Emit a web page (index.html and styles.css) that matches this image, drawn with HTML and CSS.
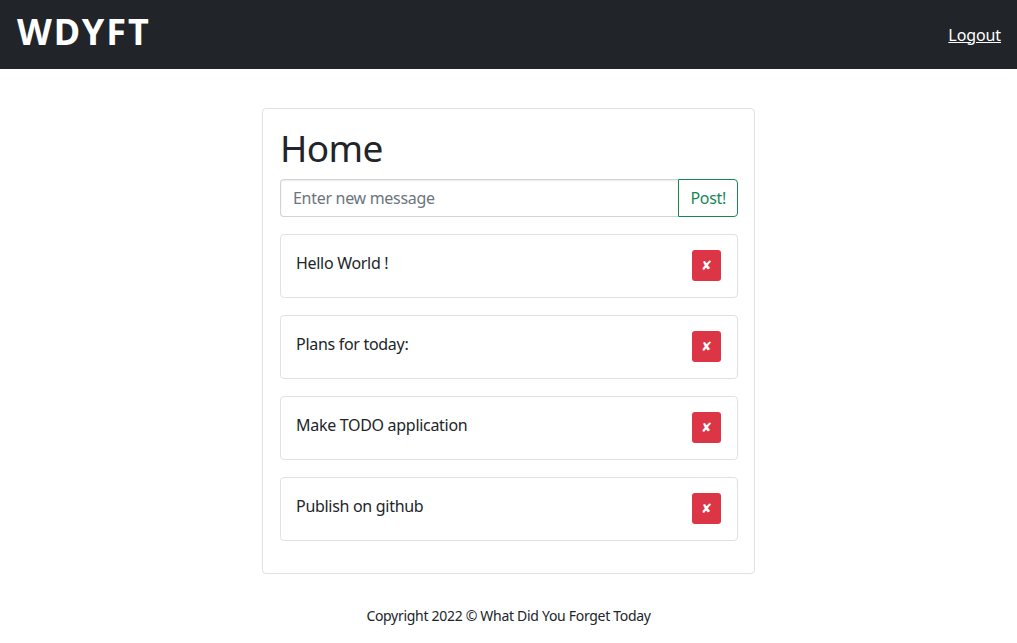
FILE: index.html
```html
<!DOCTYPE html>
<html lang="en">
<head>
<meta charset="utf-8">
<title>WDYFT</title>
<link rel="stylesheet" href="styles.css">
</head>
<body>
<nav class="navbar">
  <a class="brand" href="#">WDYFT</a>
  <a class="logout" href="#">Logout</a>
</nav>
<main class="container">
  <section class="card">
    <h1 class="title">Home</h1>
    <form class="input-group">
      <input class="field" type="text" placeholder="Enter new message">
      <button class="post" type="button">Post!</button>
    </form>
    <ul class="messages">
      <li class="message"><span class="text">Hello World !</span><button class="del" type="button">✘</button></li>
      <li class="message"><span class="text">Plans for today:</span><button class="del" type="button">✘</button></li>
      <li class="message"><span class="text">Make TODO application</span><button class="del" type="button">✘</button></li>
      <li class="message"><span class="text">Publish on github</span><button class="del" type="button">✘</button></li>
    </ul>
  </section>
</main>
<footer class="footer">Copyright 2022 © What Did You Forget Today</footer>
</body>
</html>
```

FILE: styles.css
```css
* { box-sizing: border-box; }
html, body { margin: 0; padding: 0; }
body {
  font-family: "Noto Sans", "Open Sans", sans-serif;
  font-size: 16px;
  line-height: 1.5;
  letter-spacing: -0.3px;
  color: #212529;
  background: #fff;
}
.navbar {
  height: 69px;
  background: #212529;
  display: flex;
  align-items: center;
  justify-content: space-between;
  padding: 0 16px 0 17px;
}
.brand {
  color: #fff;
  text-decoration: none;
  font-weight: 700;
  font-size: 36px;
  letter-spacing: 2px;
  line-height: 1;
  margin-top: -6px;
}
.logout {
  color: #fff;
  font-size: 16px;
  text-decoration: underline;
  letter-spacing: -0.1px;
}
.container {
  display: flex;
  justify-content: center;
  padding-top: 39px;
}
.card {
  width: 493px;
  border: 1px solid #dee2e6;
  border-radius: 4px;
  padding: 17px 16px 32px 17px;
}
.title {
  margin: 0 0 9px 0;
  font-size: 37px;
  font-weight: 400;
  line-height: 1.2;
  letter-spacing: -0.6px;
}
.input-group {
  display: flex;
  height: 38px;
  margin: 0;
}
.field {
  flex: 1;
  min-width: 0;
  border: 1px solid #ced4da;
  border-right: none;
  border-radius: 4px 0 0 4px;
  padding: 6px 12px;
  font: inherit;
  letter-spacing: -0.3px;
  color: #212529;
  box-shadow: inset 0 1px 2px rgba(0,0,0,0.08);
}
.field::placeholder { color: #6c757d; }
.post {
  border: 1px solid #198754;
  border-radius: 0 4px 4px 0;
  background: #fff;
  color: #198754;
  font: inherit;
  letter-spacing: -0.3px;
  padding: 6px 11px;
}
.messages {
  list-style: none;
  margin: 17px 0 0 0;
  padding: 0;
  display: flex;
  flex-direction: column;
  gap: 17px;
}
.message {
  display: flex;
  align-items: flex-start;
  justify-content: space-between;
  border: 1px solid #dee2e6;
  border-radius: 4px;
  padding: 15px 16px 16px 15px;
}
.text { padding-top: 1px; }
.del {
  width: 29px;
  height: 31px;
  border: none;
  border-radius: 3px;
  background: #dc3545;
  color: #fff;
  font-family: "DejaVu Sans", sans-serif;
  font-size: 13px;
  font-weight: 700;
  padding: 0;
  display: flex;
  align-items: center;
  justify-content: center;
}
.footer {
  text-align: center;
  font-size: 14px;
  padding-top: 31px;
}
```
